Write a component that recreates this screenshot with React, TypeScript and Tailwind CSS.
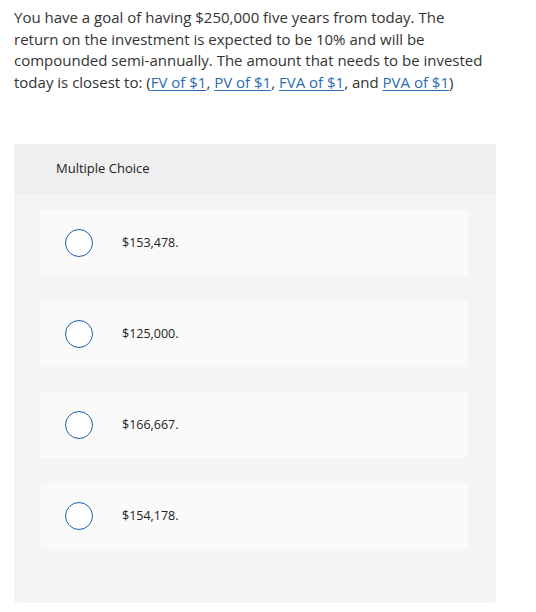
import React from 'react'

const options = ['$153,478.', '$125,000.', '$166,667.', '$154,178.']

function Link({ children }: { children: React.ReactNode }) {
  return <a className="text-[#2c6cb8] underline underline-offset-2 decoration-1">{children}</a>
}

export default function App() {
  return (
    <div className="w-[536px] h-[612px] bg-white font-['Open_Sans',sans-serif] text-[#333]">
      {/* Question prompt */}
      <p className="ml-[14px] pt-[7px] w-[478px] text-[15px] leading-[21.5px]">
        You have a goal of having $250,000 five years from today. The return on the investment is expected to
        be 10% and will be compounded semi-annually. The amount that needs to be invested today is closest to:
        (<Link>FV of $1</Link>, <Link>PV of $1</Link>, <Link>FVA of $1</Link>, and <Link>PVA of $1</Link>)
      </p>

      {/* Answer card */}
      <div className="ml-[14px] mt-[51px] w-[482px] h-[459px] rounded-[3px] overflow-hidden bg-[#f4f4f4]">
        <div className="h-[50px] bg-[#efefef] flex items-center pl-[42px] text-[13px] text-[#222]">
          Multiple Choice
        </div>
        <div className="flex flex-col gap-[25px] pt-[16px] px-[26px]">
          {options.map((o) => (
            <div key={o} className="h-[66px] w-[428px] rounded-[3px] bg-[#fafafa] flex items-center">
              <span className="ml-[25px] w-[28px] h-[28px] rounded-full border-[1.5px] border-[#1d5fa6] bg-white" />
              <span className="ml-[29px] text-[12.5px] text-[#222]">{o}</span>
            </div>
          ))}
        </div>
      </div>
    </div>
  )
}
